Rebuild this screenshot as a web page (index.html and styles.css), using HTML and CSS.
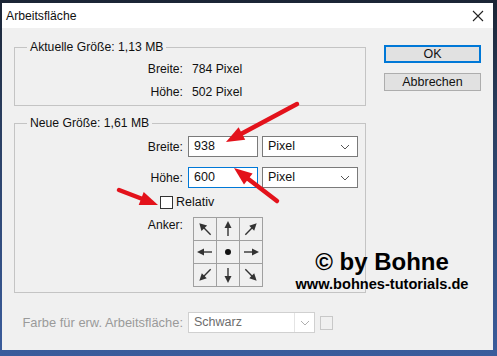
FILE: index.html
```html
<!DOCTYPE html>
<html>
<head>
<meta charset="UTF-8">
<title>Arbeitsfläche</title>
<link rel="stylesheet" href="styles.css">
</head>
<body>
<div class="window">
	<div class="titlebar">
		<span>Arbeitsfläche</span>
		<svg class="close" width="12" height="12" viewBox="0 0 12 12"><path d="M1 1L11 11M11 1L1 11" stroke="#222" stroke-width="1.1"/></svg>
	</div>

	<div class="content">
		<div class="groups">
			<fieldset class="group current">
				<legend>Aktuelle Größe: 1,13 MB</legend>
				<div class="row"><span class="label">Breite:</span><span class="value">784 Pixel</span></div>
				<div class="row"><span class="label">Höhe:</span><span class="value">502 Pixel</span></div>
			</fieldset>

			<fieldset class="group new">
				<legend>Neue Größe: 1,61 MB</legend>
				<div class="row field">
					<span class="label">Breite:</span>
					<div class="textbox">938</div>
					<div class="select">Pixel<svg class="chev" width="10" height="6" viewBox="0 0 10 6"><path d="M1 1L5 5L9 1" fill="none" stroke="#555" stroke-width="1"/></svg></div>
				</div>
				<div class="row field second">
					<span class="label">Höhe:</span>
					<div class="textbox focus">600</div>
					<div class="select">Pixel<svg class="chev" width="10" height="6" viewBox="0 0 10 6"><path d="M1 1L5 5L9 1" fill="none" stroke="#555" stroke-width="1"/></svg></div>
				</div>
				<div class="check-row"><span class="checkbox"></span>Relativ</div>
				<div class="row anchor">
					<span class="label">Anker:</span>
					<div class="anchor-grid">
						<div class="cell"><svg viewBox="0 0 22 22"><g transform="rotate(225 11 11)"><path d="M3 11H13" stroke="#333" stroke-width="1.4"/><path d="M12 7L19 11L12 15Z" fill="#333"/></g></svg></div>
						<div class="cell"><svg viewBox="0 0 22 22"><g transform="rotate(270 11 11)"><path d="M4 11H13" stroke="#333" stroke-width="1.4"/><path d="M12 7.5L19 11L12 14.5Z" fill="#333"/></g></svg></div>
						<div class="cell"><svg viewBox="0 0 22 22"><g transform="rotate(315 11 11)"><path d="M3 11H13" stroke="#333" stroke-width="1.4"/><path d="M12 7.5L19 11L12 14.5Z" fill="#333"/></g></svg></div>
						<div class="cell"><svg viewBox="0 0 22 22"><g transform="rotate(180 11 11)"><path d="M4 11H13" stroke="#333" stroke-width="1.4"/><path d="M12 7.5L19 11L12 14.5Z" fill="#333"/></g></svg></div>
						<div class="cell"><svg viewBox="0 0 22 22"><circle cx="11" cy="11" r="3" fill="#111"/></svg></div>
						<div class="cell"><svg viewBox="0 0 22 22"><path d="M4 11H13" stroke="#333" stroke-width="1.4"/><path d="M12 7.5L19 11L12 14.5Z" fill="#333"/></svg></div>
						<div class="cell"><svg viewBox="0 0 22 22"><g transform="rotate(135 11 11)"><path d="M3 11H13" stroke="#333" stroke-width="1.4"/><path d="M12 7.5L19 11L12 14.5Z" fill="#333"/></g></svg></div>
						<div class="cell"><svg viewBox="0 0 22 22"><g transform="rotate(90 11 11)"><path d="M4 11H13" stroke="#333" stroke-width="1.4"/><path d="M12 7.5L19 11L12 14.5Z" fill="#333"/></g></svg></div>
						<div class="cell"><svg viewBox="0 0 22 22"><g transform="rotate(45 11 11)"><path d="M3 11H13" stroke="#333" stroke-width="1.4"/><path d="M12 7.5L19 11L12 14.5Z" fill="#333"/></g></svg></div>
					</div>
				</div>
			</fieldset>
		</div>

		<div class="buttons">
			<div class="btn default">OK</div>
			<div class="btn">Abbrechen</div>
		</div>
	</div>

	<div class="row bottom">
		<span class="label">Farbe für erw. Arbeitsfläche:</span>
		<div class="select disabled">Schwarz<span class="drop"><svg width="10" height="6" viewBox="0 0 10 6"><path d="M1 1L5 5L9 1" fill="none" stroke="#b0b0b0" stroke-width="1"/></svg></span></div>
		<span class="swatch"></span>
	</div>

	<div class="watermark">
		<div class="big">© by Bohne</div>
		<div class="url">www.bohnes-tutorials.de</div>
	</div>
</div>

<!-- rote Pfeile -->
<svg class="arrows" width="497" height="356" viewBox="0 0 497 356">
	<g stroke="#e3121b" stroke-width="4.5" stroke-linecap="round">
		<line x1="297" y1="104" x2="241.9" y2="133.5"/>
		<line x1="277" y1="201" x2="248.3" y2="179"/>
		<line x1="119" y1="190" x2="141.2" y2="198.5"/>
	</g>
	<g fill="#e3121b">
		<polygon points="226,142 238.6,127.3 245.2,139.7"/>
		<polygon points="234,168 252.6,173.4 244,184.6"/>
		<polygon points="158,205 138.7,205 143.7,192"/>
	</g>
</svg>
</body>
</html>
```

FILE: styles.css
```css
body {
	margin: 0;
	width: 497px;
	height: 356px;
	position: relative;
	overflow: hidden;
	background: linear-gradient(#1b2535 0px, #2a3e60 120px, #3a5c9c 356px);
	font-family: "Liberation Sans", Arial, sans-serif;
	font-size: 12.2px;
	color: #111;
}

.window {
	position: relative;
	margin: 3px 4px 0 2px;
	height: 347px;
	background: #f0f0f0;
}

.titlebar {
	height: 25px;
	background: #fff;
	display: flex;
	align-items: center;
	justify-content: space-between;
	padding: 0 9px 0 4px;
	font-size: 12.2px;
}

.content {
	display: flex;
	padding-left: 12px;
}

.groups {
	width: 352px;
	padding-top: 11px;
}

.group {
	margin: 0;
	padding: 0;
	border: 1px solid #c4c4c4;
	box-sizing: border-box;
	width: 352px;
}

.group legend {
	margin-left: 12px;
	padding: 0 3px;
	line-height: 16px;
}

.current {
	padding: 2px 0 2px 0;
}

.new {
	margin-top: 9px;
	padding: 4px 0 5px 0;
}

.row {
	display: flex;
	align-items: center;
	height: 23px;
}

.label {
	width: 168px;
	text-align: right;
	flex-shrink: 0;
}

.value {
	margin-left: 9px;
}

.field .textbox {
	margin-left: 5px;
}

.second {
	margin-top: 8px;
}

.textbox {
	width: 70px;
	height: 21px;
	box-sizing: border-box;
	border: 1px solid #7a7a7a;
	background: #fff;
	padding: 0 5px;
	line-height: 19px;
	font-size: 12.5px;
}

.textbox.focus {
	border-color: #0078d7;
}

.select {
	margin-left: 4px;
	width: 96px;
	height: 21px;
	box-sizing: border-box;
	border: 1px solid #7a7a7a;
	background: #fff;
	padding: 0 7px 0 5px;
	line-height: 19px;
	font-size: 12.5px;
	display: flex;
	justify-content: space-between;
	align-items: center;
}

.check-row {
	display: flex;
	align-items: center;
	height: 14px;
	margin-top: 6px;
	padding-left: 145px;
	font-size: 12.5px;
}

.checkbox {
	width: 13px;
	height: 13px;
	box-sizing: border-box;
	border: 1px solid #333;
	background: #fff;
	margin-right: 3px;
}

.anchor {
	margin-top: 8px;
	height: auto;
	align-items: flex-start;
}

.anchor .label {
	line-height: 16px;
}

.anchor-grid {
	margin-left: 10px;
	display: grid;
	grid-template-columns: repeat(3, 22px);
	grid-template-rows: repeat(3, 22px);
	gap: 1px;
	border: 1px solid #a0a0a0;
	background: #a0a0a0;
}

.cell {
	background: #f0f0f0;
}

.cell svg {
	display: block;
	width: 22px;
	height: 22px;
}

.buttons {
	margin-left: 18px;
	padding-top: 17px;
	display: flex;
	flex-direction: column;
	gap: 10px;
}

.btn {
	width: 97px;
	height: 18px;
	box-sizing: border-box;
	border: 1px solid #adadad;
	background: #e1e1e1;
	text-align: center;
	line-height: 16px;
	font-size: 12.5px;
}

.btn.default {
	border: 2px solid #0078d7;
	line-height: 14px;
}

.bottom {
	margin-top: 19px;
	height: 21px;
	padding-left: 13px;
}

.bottom .label {
	color: #9a9a9a;
	font-size: 12.9px;
}

.select.disabled {
	margin-left: 5px;
	width: 127px;
	border-color: #d0d0d0;
	padding: 0 0 0 5px;
	color: #6d6d6d;
}

.drop {
	width: 19px;
	height: 19px;
	border-left: 1px solid #e4e4e4;
	display: flex;
	align-items: center;
	justify-content: center;
}

.swatch {
	margin-left: 5px;
	width: 13px;
	height: 14px;
	box-sizing: border-box;
	border: 1px solid #c8c8c8;
}

.watermark {
	position: absolute;
	left: 280px;
	top: 246px;
	width: 200px;
	text-align: center;
	font-weight: bold;
	color: #000;
}

.watermark .big {
	font-size: 24px;
	line-height: 25px;
}

.watermark .url {
	font-size: 14.6px;
	line-height: 20px;
}

.arrows {
	position: absolute;
	left: 0;
	top: 0;
	pointer-events: none;
}
```
